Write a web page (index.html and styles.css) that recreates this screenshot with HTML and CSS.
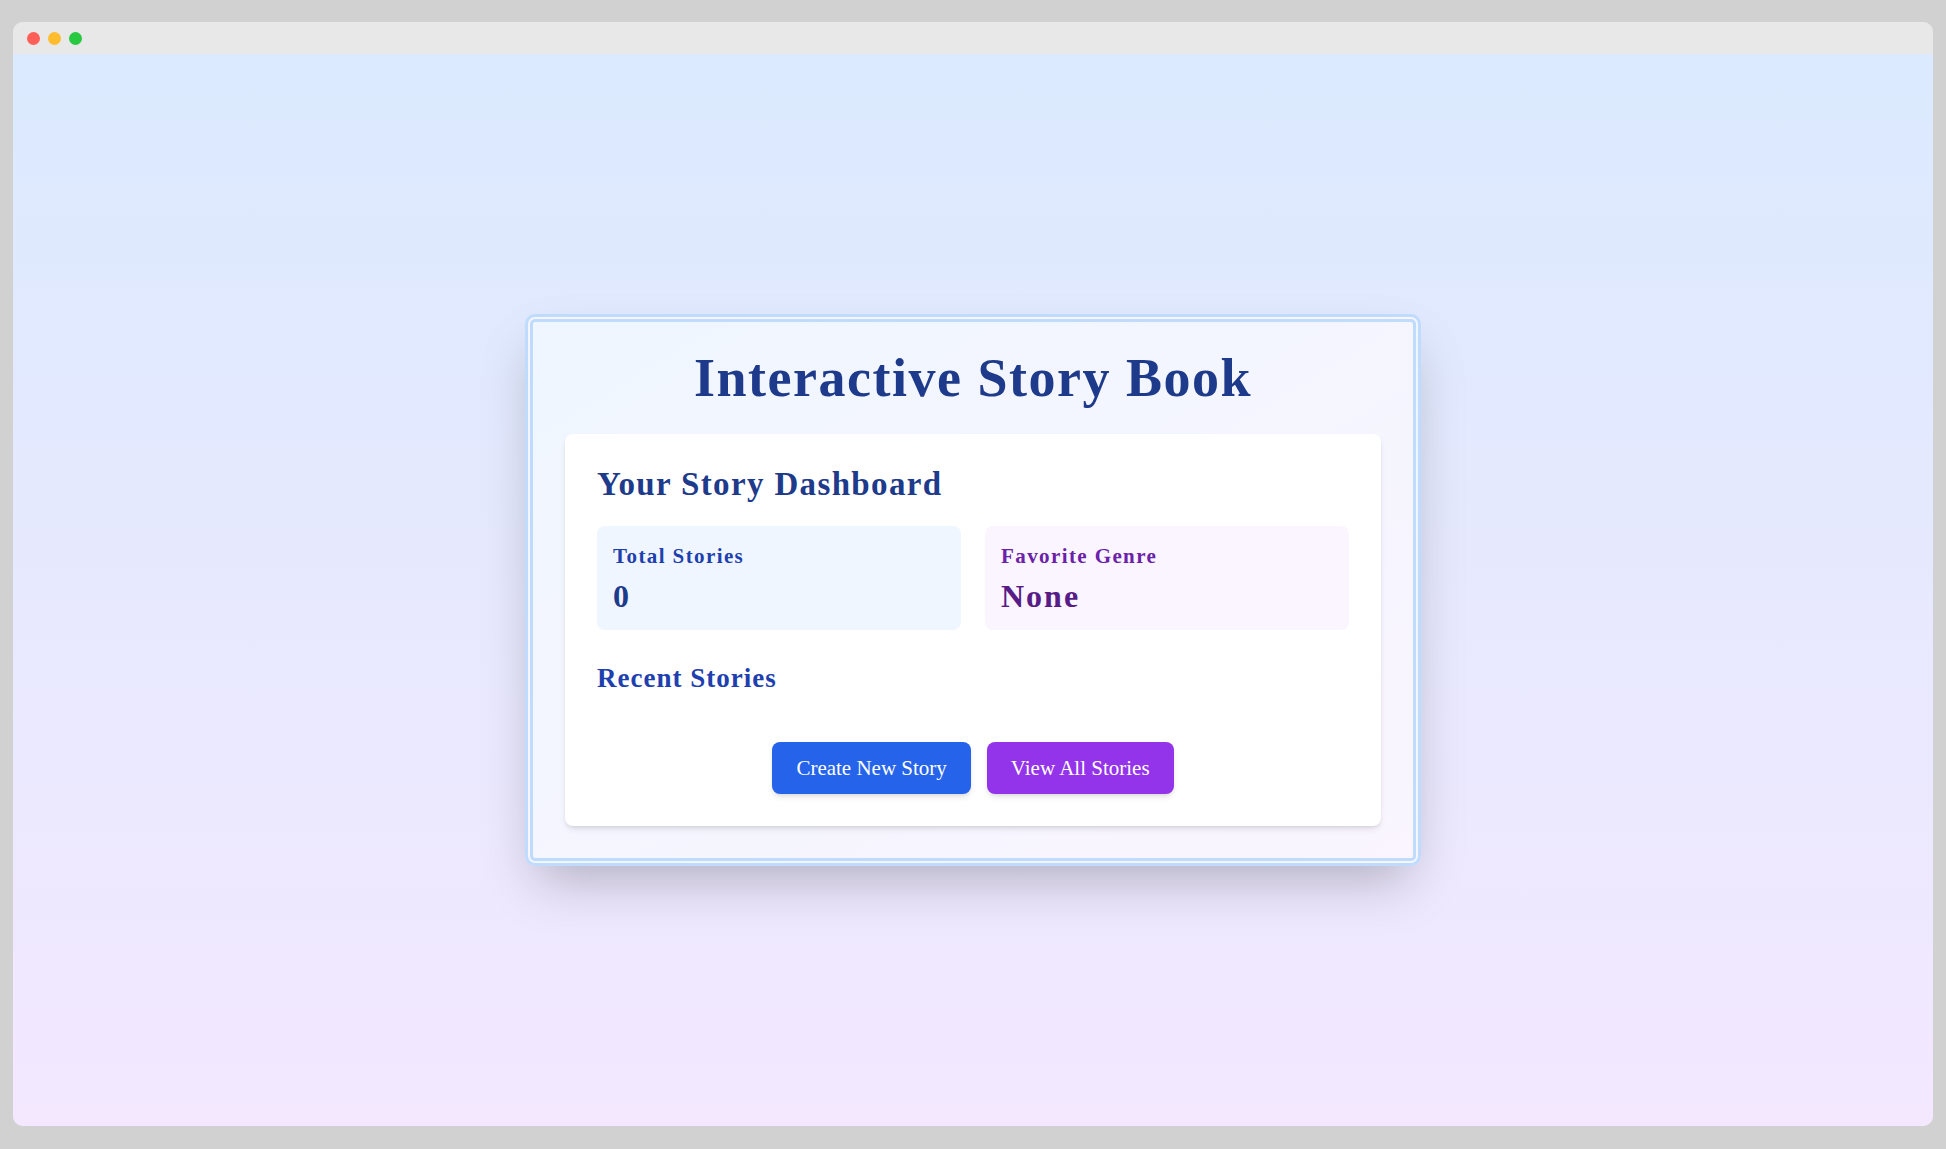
FILE: index.html
```html
<!DOCTYPE html>
<html lang="en">
<head>
<meta charset="utf-8">
<title>Interactive Story Book</title>
<link rel="stylesheet" href="styles.css">
</head>
<body>
<div class="window">
  <div class="titlebar">
    <span class="dot dot-red"></span>
    <span class="dot dot-yellow"></span>
    <span class="dot dot-green"></span>
  </div>
  <main class="page">
    <section class="book">
      <h1 class="book-title">Interactive Story Book</h1>
      <div class="dashboard">
        <h2 class="dashboard-title">Your Story Dashboard</h2>
        <div class="stats">
          <div class="stat stat-blue">
            <p class="stat-label">Total Stories</p>
            <p class="stat-value">0</p>
          </div>
          <div class="stat stat-purple">
            <p class="stat-label">Favorite Genre</p>
            <p class="stat-value">None</p>
          </div>
        </div>
        <h3 class="recent-title">Recent Stories</h3>
        <div class="recent-list"></div>
        <div class="actions">
          <button class="btn btn-blue">Create New Story</button>
          <button class="btn btn-purple">View All Stories</button>
        </div>
      </div>
    </section>
  </main>
</div>
</body>
</html>
```
FILE: styles.css
```css
* { box-sizing: border-box; }
html, body { margin: 0; }
body {
  background: #d1d1d1;
  padding: 22px 13px 23px;
  font-family: Georgia, "Liberation Serif", serif;
}
.window {
  height: 1104px;
  border-radius: 10px;
  overflow: hidden;
  display: flex;
  flex-direction: column;
  background: #e8e8e8;
}
.titlebar {
  height: 32px;
  flex: none;
  display: flex;
  align-items: center;
  gap: 8px;
  padding-left: 14px;
  background: #e8e8e8;
}
.dot { width: 13px; height: 13px; border-radius: 50%; display: block; }
.dot-red { background: #ff5f57; }
.dot-yellow { background: #febc2e; }
.dot-green { background: #28c840; }
.page {
  flex: 1;
  display: flex;
  align-items: center;
  justify-content: center;
  background: linear-gradient(to bottom, #dbeafe, #f3e8ff);
}
.book {
  width: 896px;
  padding: 32px;
  border: 8px double #bfdbfe;
  border-radius: 10px;
  background: linear-gradient(to bottom right, #eff6ff, #faf5ff);
  box-shadow: 0 25px 50px -12px rgba(0, 0, 0, 0.25);
}
.book-title {
  margin: 0 0 32px;
  font-size: 54px;
  line-height: 48px;
  letter-spacing: 1.5px;
  font-weight: 700;
  text-align: center;
  color: #1e3a8a;
}
.dashboard {
  background: #fff;
  border-radius: 8px;
  padding: 32px;
  box-shadow: 0 4px 6px -1px rgba(0,0,0,0.1), 0 2px 4px -2px rgba(0,0,0,0.1);
}
.dashboard-title {
  margin: 0 0 24px;
  font-size: 33px;
  line-height: 36px;
  letter-spacing: 1.35px;
  font-weight: 700;
  color: #1e3a8a;
}
.stats {
  display: grid;
  grid-template-columns: 1fr 1fr;
  gap: 24px;
  margin-bottom: 32px;
}
.stat { padding: 16px; border-radius: 8px; }
.stat p { margin: 0; font-weight: 700; }
.stat-label { font-size: 21px; line-height: 28px; letter-spacing: 1.4px; margin-bottom: 8px !important; }
.stat-value { font-size: 32px; line-height: 36px; letter-spacing: 2px; }
.stat-blue { background: #eff6ff; }
.stat-blue .stat-label { color: #1e40af; }
.stat-blue .stat-value { color: #1e3a8a; }
.stat-purple { background: #faf5ff; }
.stat-purple .stat-label { color: #6b21a8; }
.stat-purple .stat-value { color: #581c87; }
.recent-title {
  margin: 0 0 16px;
  font-size: 27px;
  line-height: 32px;
  letter-spacing: 1px;
  font-weight: 700;
  color: #1e40af;
}
.actions {
  margin-top: 48px;
  display: flex;
  justify-content: center;
  gap: 16px;
}
.btn {
  font-family: inherit;
  font-size: 21px;
  line-height: 28px;
  padding: 12px 24px;
  border: 0;
  border-radius: 8px;
  color: #fff;
  box-shadow: 0 4px 6px -1px rgba(0,0,0,0.1), 0 2px 4px -2px rgba(0,0,0,0.1);
  cursor: pointer;
}
.btn-blue { background: #2563eb; }
.btn-purple { background: #9333ea; }
```
